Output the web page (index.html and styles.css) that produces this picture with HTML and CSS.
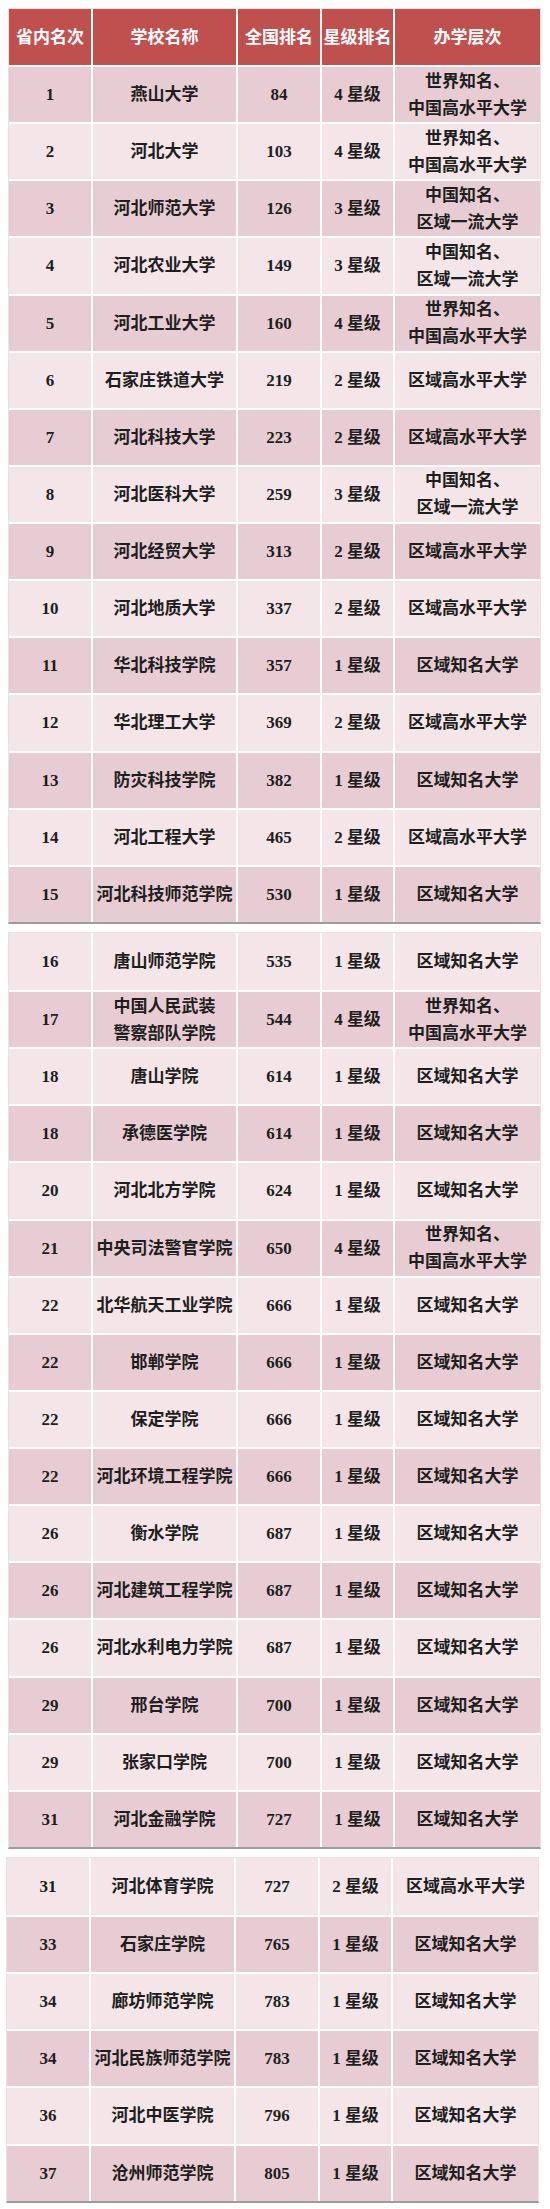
FILE: index.html
```html
<!DOCTYPE html>
<html lang="zh-CN">
<head>
<meta charset="utf-8">
<title>河北高校排名</title>
<link rel="stylesheet" href="styles.css">
</head>
<body>
<main class="page">
  <table class="sheet sheet-first">
    <colgroup>
      <col class="c1"><col class="c2"><col class="c3"><col class="c4"><col class="c5">
    </colgroup>
    <thead>
      <tr class="head"><th>省内名次</th><th>学校名称</th><th>全国排名</th><th>星级排名</th><th>办学层次</th></tr>
    </thead>
    <tbody>
      <tr><td>1</td><td>燕山大学</td><td>84</td><td>4 星级</td><td class="two">世界知名、<br>中国高水平大学</td></tr>
      <tr><td>2</td><td>河北大学</td><td>103</td><td>4 星级</td><td class="two">世界知名、<br>中国高水平大学</td></tr>
      <tr><td>3</td><td>河北师范大学</td><td>126</td><td>3 星级</td><td class="two">中国知名、<br>区域一流大学</td></tr>
      <tr><td>4</td><td>河北农业大学</td><td>149</td><td>3 星级</td><td class="two">中国知名、<br>区域一流大学</td></tr>
      <tr><td>5</td><td>河北工业大学</td><td>160</td><td>4 星级</td><td class="two">世界知名、<br>中国高水平大学</td></tr>
      <tr><td>6</td><td>石家庄铁道大学</td><td>219</td><td>2 星级</td><td>区域高水平大学</td></tr>
      <tr><td>7</td><td>河北科技大学</td><td>223</td><td>2 星级</td><td>区域高水平大学</td></tr>
      <tr><td>8</td><td>河北医科大学</td><td>259</td><td>3 星级</td><td class="two">中国知名、<br>区域一流大学</td></tr>
      <tr><td>9</td><td>河北经贸大学</td><td>313</td><td>2 星级</td><td>区域高水平大学</td></tr>
      <tr><td>10</td><td>河北地质大学</td><td>337</td><td>2 星级</td><td>区域高水平大学</td></tr>
      <tr><td>11</td><td>华北科技学院</td><td>357</td><td>1 星级</td><td>区域知名大学</td></tr>
      <tr><td>12</td><td>华北理工大学</td><td>369</td><td>2 星级</td><td>区域高水平大学</td></tr>
      <tr><td>13</td><td>防灾科技学院</td><td>382</td><td>1 星级</td><td>区域知名大学</td></tr>
      <tr><td>14</td><td>河北工程大学</td><td>465</td><td>2 星级</td><td>区域高水平大学</td></tr>
      <tr><td>15</td><td>河北科技师范学院</td><td>530</td><td>1 星级</td><td>区域知名大学</td></tr>
    </tbody>
  </table>

  <table class="sheet sheet-cont">
    <colgroup>
      <col class="c1"><col class="c2"><col class="c3"><col class="c4"><col class="c5">
    </colgroup>
    <tbody>
      <tr><td>16</td><td>唐山师范学院</td><td>535</td><td>1 星级</td><td>区域知名大学</td></tr>
      <tr><td>17</td><td class="two">中国人民武装<br>警察部队学院</td><td>544</td><td>4 星级</td><td class="two">世界知名、<br>中国高水平大学</td></tr>
      <tr><td>18</td><td>唐山学院</td><td>614</td><td>1 星级</td><td>区域知名大学</td></tr>
      <tr><td>18</td><td>承德医学院</td><td>614</td><td>1 星级</td><td>区域知名大学</td></tr>
      <tr><td>20</td><td>河北北方学院</td><td>624</td><td>1 星级</td><td>区域知名大学</td></tr>
      <tr><td>21</td><td>中央司法警官学院</td><td>650</td><td>4 星级</td><td class="two">世界知名、<br>中国高水平大学</td></tr>
      <tr><td>22</td><td>北华航天工业学院</td><td>666</td><td>1 星级</td><td>区域知名大学</td></tr>
      <tr><td>22</td><td>邯郸学院</td><td>666</td><td>1 星级</td><td>区域知名大学</td></tr>
      <tr><td>22</td><td>保定学院</td><td>666</td><td>1 星级</td><td>区域知名大学</td></tr>
      <tr><td>22</td><td>河北环境工程学院</td><td>666</td><td>1 星级</td><td>区域知名大学</td></tr>
      <tr><td>26</td><td>衡水学院</td><td>687</td><td>1 星级</td><td>区域知名大学</td></tr>
      <tr><td>26</td><td>河北建筑工程学院</td><td>687</td><td>1 星级</td><td>区域知名大学</td></tr>
      <tr><td>26</td><td>河北水利电力学院</td><td>687</td><td>1 星级</td><td>区域知名大学</td></tr>
      <tr><td>29</td><td>邢台学院</td><td>700</td><td>1 星级</td><td>区域知名大学</td></tr>
      <tr><td>29</td><td>张家口学院</td><td>700</td><td>1 星级</td><td>区域知名大学</td></tr>
      <tr><td>31</td><td>河北金融学院</td><td>727</td><td>1 星级</td><td>区域知名大学</td></tr>
    </tbody>
  </table>

  <table class="sheet sheet-cont sheet-last">
    <colgroup>
      <col class="c1"><col class="c2"><col class="c3"><col class="c4"><col class="c5">
    </colgroup>
    <tbody>
      <tr><td>31</td><td>河北体育学院</td><td>727</td><td>2 星级</td><td>区域高水平大学</td></tr>
      <tr><td>33</td><td>石家庄学院</td><td>765</td><td>1 星级</td><td>区域知名大学</td></tr>
      <tr><td>34</td><td>廊坊师范学院</td><td>783</td><td>1 星级</td><td>区域知名大学</td></tr>
      <tr><td>34</td><td>河北民族师范学院</td><td>783</td><td>1 星级</td><td>区域知名大学</td></tr>
      <tr><td>36</td><td>河北中医学院</td><td>796</td><td>1 星级</td><td>区域知名大学</td></tr>
      <tr><td>37</td><td>沧州师范学院</td><td>805</td><td>1 星级</td><td>区域知名大学</td></tr>
    </tbody>
  </table>
</main>
</body>
</html>
```

FILE: styles.css
```css
html, body {
  margin: 0;
  padding: 0;
  background: #ffffff;
}

.page {
  padding: 8px 0 0 8px;
  display: flex;
  flex-direction: column;
  gap: 8px;
  font-family: "Liberation Serif", "Noto Sans CJK SC", serif;
  font-weight: 700;
  font-size: 17px;
  color: #1e1e1e;
}

.sheet {
  border-collapse: separate;
  border-spacing: 0;
  table-layout: fixed;
  width: 533px;
  border: 1px solid #e4e4e4;
  border-bottom: 2px solid #9c9c9c;
  background: #ffffff;
}

.sheet-last {
  margin-left: -2px;
}

.c1 { width: 82px; }
.c2 { width: 145px; }
.c3 { width: 84px; }
.c4 { width: 73px; }
.c5 { width: 147px; }

.sheet th,
.sheet td {
  padding: 0;
  text-align: center;
  vertical-align: middle;
  border-left: 2px solid #ffffff;
  border-top: 2px solid #ffffff;
  line-height: 27px;
  white-space: nowrap;
}

.sheet th:first-child,
.sheet td:first-child {
  border-left: none;
}

.sheet thead tr:first-child th,
.sheet-cont tbody tr:first-child td {
  border-top: none;
}

.head th {
  height: 56px;
  box-sizing: border-box;
  background: #c0504d;
  color: #ffffff;
  font-weight: 700;
  letter-spacing: 0;
}

.sheet tbody tr {
  height: 57.13px;
}

.sheet-first tbody tr:nth-child(odd) td,
.sheet-cont tbody tr:nth-child(even) td {
  background: #e7cdd3;
}

.sheet-first tbody tr:nth-child(even) td,
.sheet-cont tbody tr:nth-child(odd) td {
  background: #f3e5e8;
}
```
